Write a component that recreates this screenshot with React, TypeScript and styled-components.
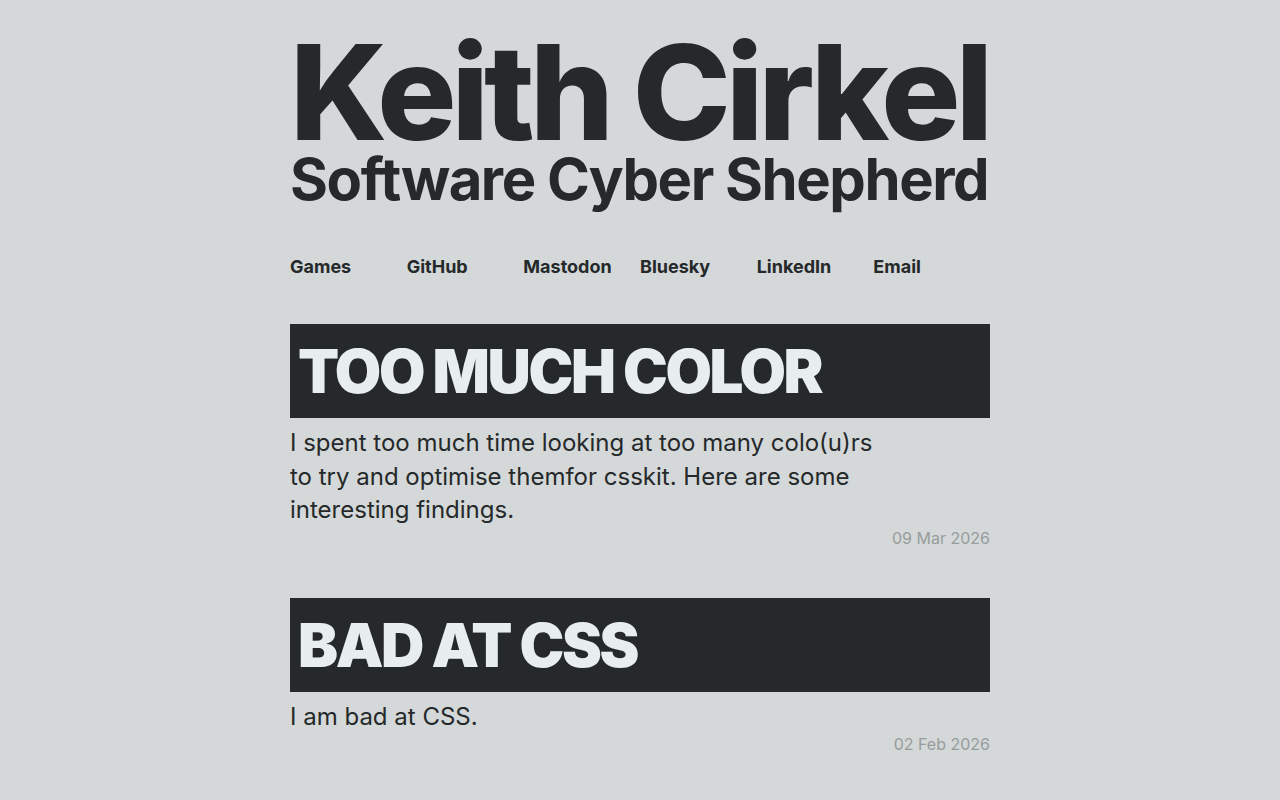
import React from "react";
import styled, { createGlobalStyle } from "styled-components";

const GlobalStyle = createGlobalStyle`
  html, body {
    margin: 0;
    padding: 0;
    background: #d4d8d9;
    color: #25292a;
    font-family: Inter, "Noto Sans", sans-serif;
  }
`;

interface Post {
  title: string;
  summary: string;
  date: string;
}

const posts: Post[] = [
  {
    title: "TOO MUCH COLOR",
    summary:
      "I spent too much time looking at too many colo(u)rs to try and optimise themfor csskit. Here are some interesting findings.",
    date: "09 Mar 2026",
  },
  {
    title: "BAD AT CSS",
    summary: "I am bad at CSS.",
    date: "02 Feb 2026",
  },
];

const links = ["Games", "GitHub", "Mastodon", "Bluesky", "LinkedIn", "Email"];

const Page = styled.main`
  width: 700px;
  margin: 0 auto;
  padding-top: 34px;
`;

const Header = styled.header`
  display: flex;
  flex-direction: column;
`;

const Name = styled.h1`
  margin: 0;
  font-size: 132px;
  font-weight: 800;
  letter-spacing: -0.0375em;
  line-height: 116px;
  white-space: nowrap;
`;

const Tagline = styled.h2`
  margin: 0;
  font-size: 58px;
  font-weight: 700;
  letter-spacing: -0.025em;
  line-height: 1;
  white-space: nowrap;
`;

const Nav = styled.nav`
  display: grid;
  grid-template-columns: repeat(6, 1fr);
  margin-top: 48px;
`;

const NavLink = styled.a`
  font-size: 18px;
  font-weight: 700;
  color: #25292a;
  text-decoration: none;
`;

const PostList = styled.section`
  display: flex;
  flex-direction: column;
  gap: 50px;
  margin-top: 47px;
`;

const Article = styled.article`
  display: flex;
  flex-direction: column;
`;

const PostTitle = styled.h3`
  margin: 0;
  height: 94px;
  display: flex;
  align-items: center;
  padding: 0 8px;
  background: #25292a;
  color: #e8eeee;
  font-size: 60px;
  font-weight: 900;
  letter-spacing: -0.04em;
  line-height: 1;
`;

const Summary = styled.p`
  margin: 8px 0 0;
  max-width: 600px;
  font-size: 24px;
  line-height: 33.5px;
`;

const PostDate = styled.time`
  align-self: flex-end;
  font-size: 16px;
  color: #979c9c;
  margin-top: 1px;
`;

export default function App() {
  return (
    <>
      <GlobalStyle />
      <Page>
        <Header>
          <Name>Keith Cirkel</Name>
          <Tagline>Software Cyber Shepherd</Tagline>
        </Header>
        <Nav>
          {links.map((l) => (
            <NavLink key={l} href="#">
              {l}
            </NavLink>
          ))}
        </Nav>
        <PostList>
          {posts.map((p) => (
            <Article key={p.title}>
              <PostTitle>{p.title}</PostTitle>
              <Summary>{p.summary}</Summary>
              <PostDate>{p.date}</PostDate>
            </Article>
          ))}
        </PostList>
      </Page>
    </>
  );
}
